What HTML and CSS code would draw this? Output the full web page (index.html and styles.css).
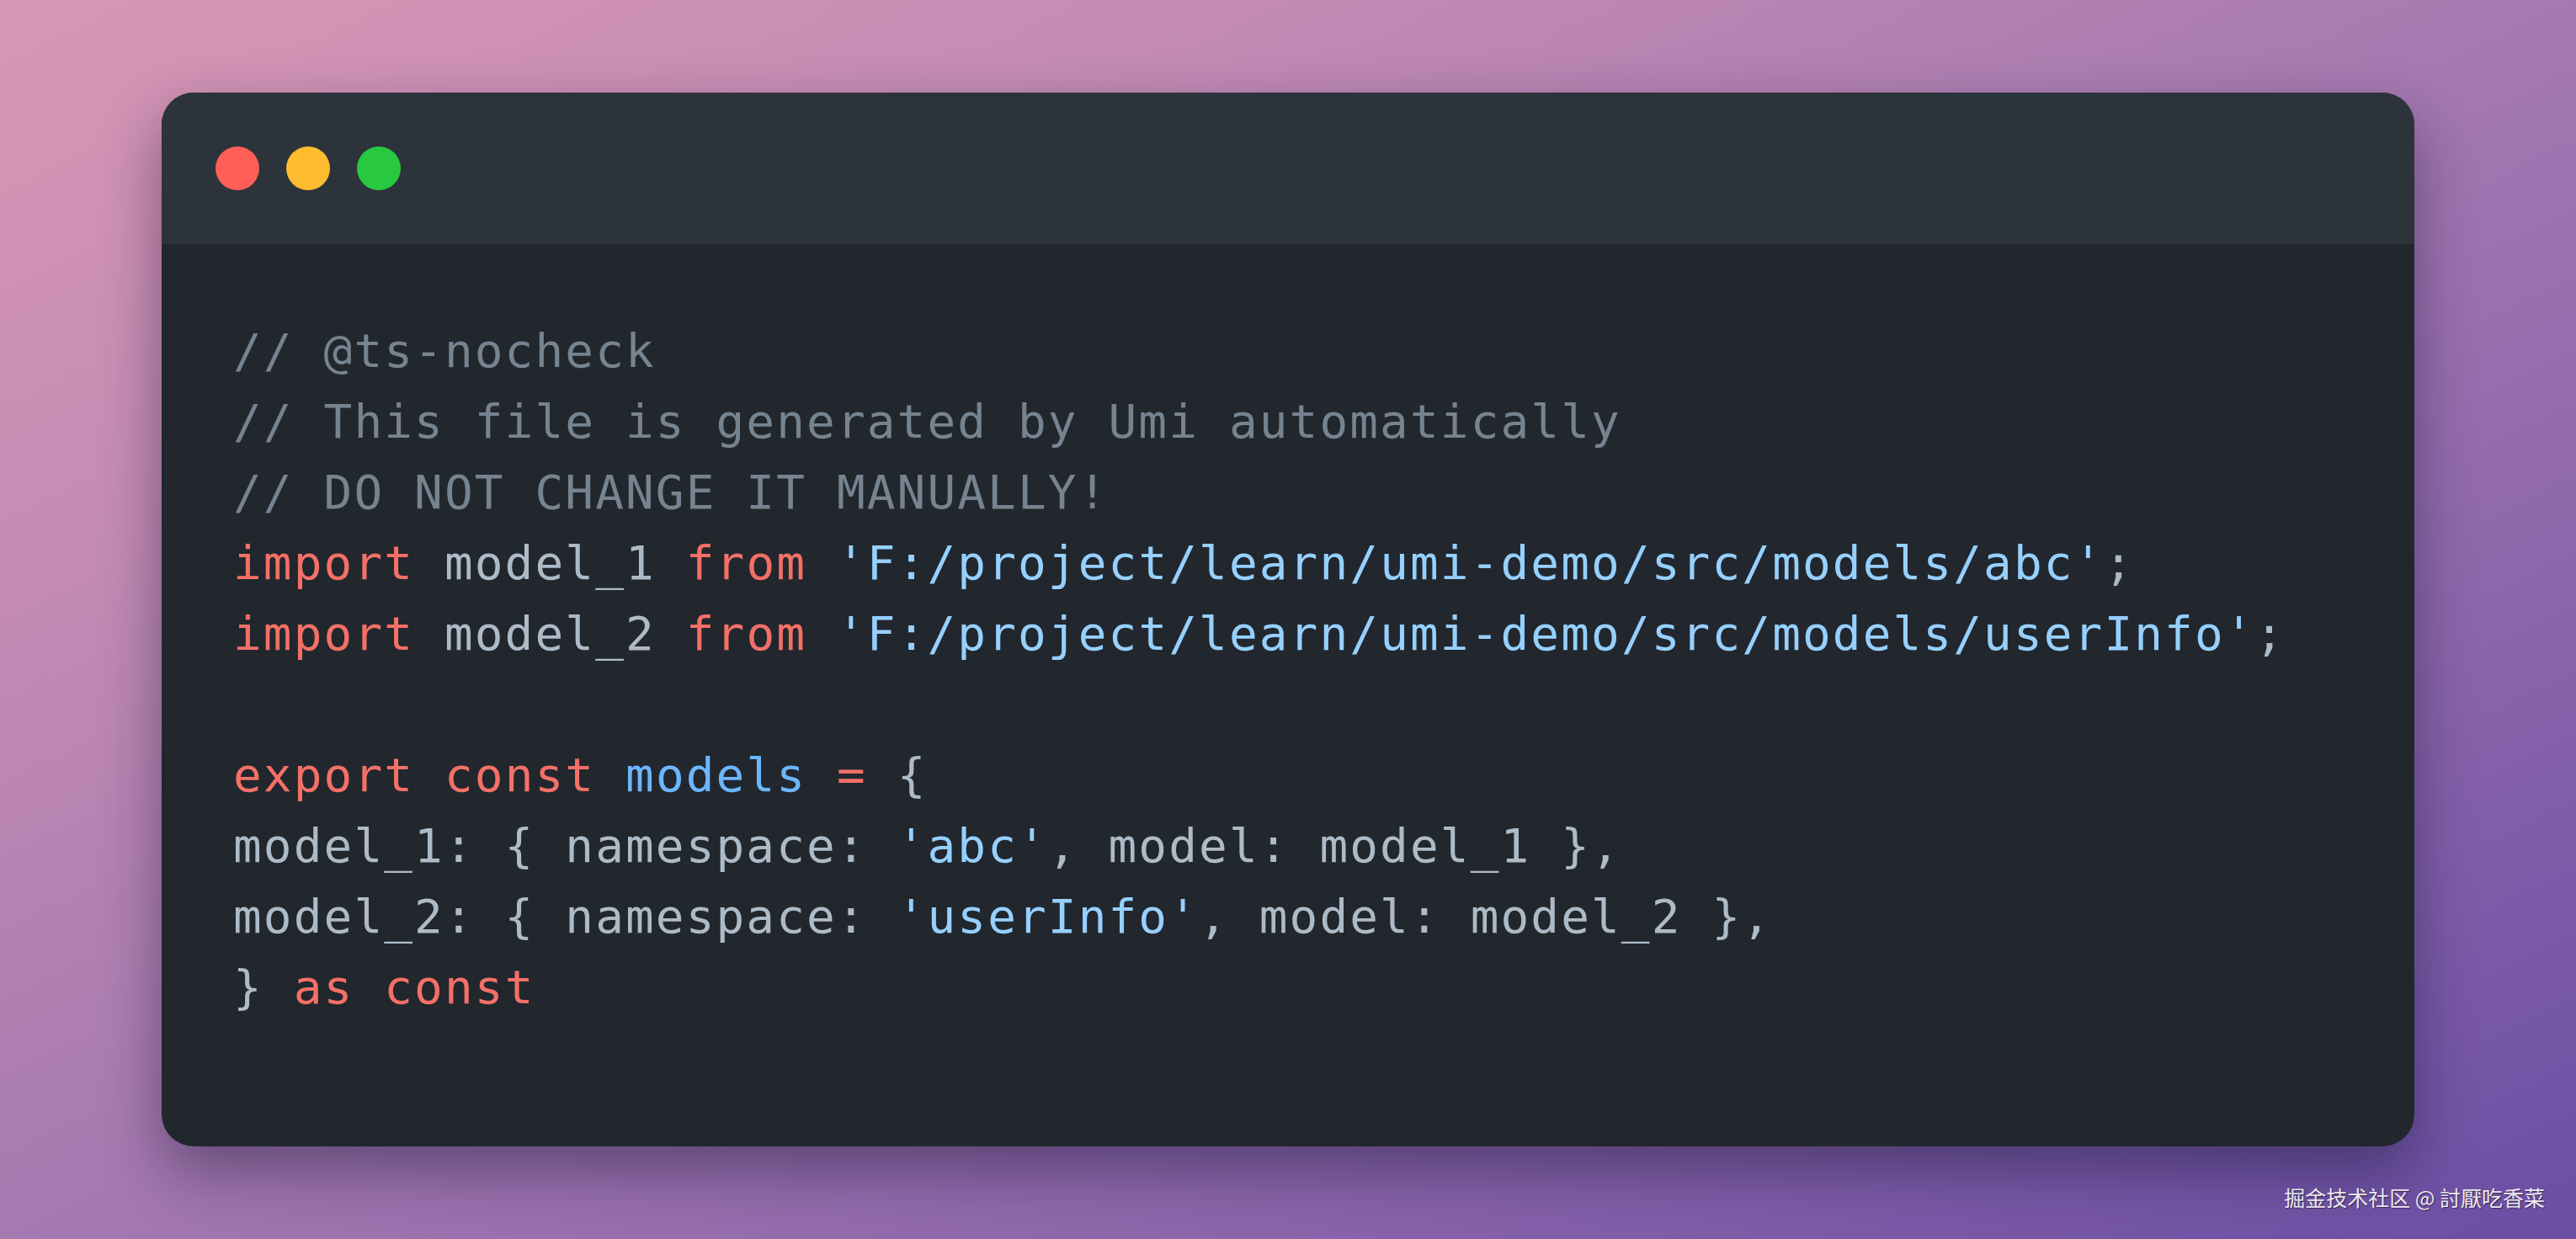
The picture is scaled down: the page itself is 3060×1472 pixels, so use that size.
FILE: index.html
```html
<!DOCTYPE html>
<html lang="en">
<head>
<meta charset="utf-8">
<title>models</title>
<link rel="stylesheet" href="styles.css">
</head>
<body>
<div class="stage">
  <div class="window">
    <div class="titlebar">
      <span class="dot dot-red"></span>
      <span class="dot dot-yellow"></span>
      <span class="dot dot-green"></span>
    </div>
    <pre class="code"><span class="c">// @ts-nocheck</span>
<span class="c">// This file is generated by Umi automatically</span>
<span class="c">// DO NOT CHANGE IT MANUALLY!</span>
<span class="k">import</span> model_1 <span class="k">from</span> <span class="s">'F:/project/learn/umi-demo/src/models/abc'</span>;
<span class="k">import</span> model_2 <span class="k">from</span> <span class="s">'F:/project/learn/umi-demo/src/models/userInfo'</span>;

<span class="k">export</span> <span class="k">const</span> <span class="v">models</span> <span class="k">=</span> {
model_1: { namespace: <span class="s">'abc'</span>, model: model_1 },
model_2: { namespace: <span class="s">'userInfo'</span>, model: model_2 },
} <span class="k">as</span> <span class="k">const</span></pre>
  </div>
  <div class="watermark">掘金技术社区 @ 討厭吃香菜</div>
</div>
</body>
</html>
```
FILE: styles.css
```css
html, body {
  margin: 0;
  padding: 0;
}

body {
  width: 3060px;
  height: 1472px;
  overflow: hidden;
}

.stage {
  position: relative;
  box-sizing: border-box;
  width: 3060px;
  height: 1472px;
  padding: 110px 192px;
  background: linear-gradient(to bottom right, #d896b5 0%, #c38bb4 25%, #a679b1 50%, #8a64ab 75%, #6a4ea4 100%);
}

.window {
  display: flex;
  flex-direction: column;
  height: 100%;
  border-radius: 38px;
  overflow: hidden;
  background: #22272e;
  box-shadow: 0 30px 70px rgba(20, 20, 50, 0.45);
}

.titlebar {
  display: flex;
  align-items: center;
  gap: 32px;
  height: 180px;
  padding-left: 64px;
  background: #2d333b;
  flex-shrink: 0;
}

.dot {
  width: 52px;
  height: 52px;
  border-radius: 50%;
}

.dot-red { background: #ff5f57; }
.dot-yellow { background: #febc2e; }
.dot-green { background: #28c840; }

.code {
  flex: 1;
  margin: 0;
  padding: 85px 85px 0;
  font-family: "DejaVu Sans Mono", "Liberation Mono", monospace;
  font-size: 56px;
  letter-spacing: 2.13px;
  line-height: 84px;
  color: #adbac7;
  white-space: pre;
}

.c { color: #768390; }
.k { color: #f47067; }
.s { color: #96d0ff; }
.v { color: #6cb6ff; }

.watermark {
  position: absolute;
  right: 37px;
  bottom: 34px;
  font-family: "Noto Sans CJK SC", "Noto Sans", sans-serif;
  font-size: 25px;
  line-height: 32px;
  color: #ebe8f0;
  text-shadow: 1px 1px 1px rgba(30, 20, 50, 0.7);
}
```
